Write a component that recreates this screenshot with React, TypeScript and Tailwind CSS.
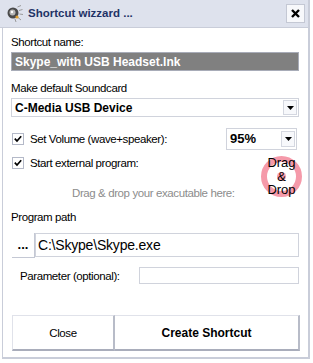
import React from "react";

const lib = { fontFamily: "'Liberation Sans', Arial, sans-serif" };

const Check = () => (
  <span className="flex h-[12px] w-[12px] shrink-0 items-center justify-center border border-[#b4b9c8] bg-white">
    <svg width="8" height="8" viewBox="0 0 8 8">
      <path d="M0.8 3.6 L3 6 L7.2 1.2" stroke="#000" strokeWidth="1.7" fill="none" />
    </svg>
  </span>
);

const Arrow = ({ h }: { h: string }) => (
  <span className={`mr-[1px] flex w-[14px] items-center justify-center border border-[#d4d7e0] bg-[#f7f8fb] ${h}`}>
    <svg width="7" height="4" viewBox="0 0 7 4">
      <path d="M0 0 H7 L3.5 4 Z" fill="#000" />
    </svg>
  </span>
);

export default function App() {
  return (
    <div className="h-[363px] w-[313px] bg-white text-black" style={lib}>
      <div className="flex h-[359px] w-[310px] flex-col">
        <div className="flex h-[28px] shrink-0 items-center border-b border-r-2 border-[#c9cdd9] bg-[#dee2ed] pl-[6px] pr-[3px]">
          <svg width="17" height="17" viewBox="0 0 17 17" className="shrink-0">
            <circle cx="7" cy="8" r="5.5" fill="#4a4a4a" />
            <circle cx="6.5" cy="7.5" r="3" fill="#b8b8b8" />
            <circle cx="6" cy="7" r="1.2" fill="#fff" />
            <path d="M11.5 2 L15 0.5 M13 5.5 L16.5 4.5 M13.5 9 L17 9.5 M12 12.5 L15 15 M9 14 L10 17" stroke="#9a9a9a" strokeWidth="1" />
            <circle cx="11" cy="12" r="1.6" fill="#e0a030" />
          </svg>
          <span className="ml-[5px] text-[11.5px] font-bold text-[#1f3366]">
            Shortcut wizzard ...
          </span>
          <span className="ml-auto flex h-[19px] w-[19px] items-center justify-center border border-[#c4c8d4] bg-[#f7f8fb]">
            <svg width="9" height="9" viewBox="0 0 9 9">
              <path d="M1 1 L8 8 M8 1 L1 8" stroke="#000" strokeWidth="2.4" />
            </svg>
          </span>
        </div>
        <div className="ml-[2px] flex flex-1 flex-col whitespace-nowrap border-b-2 border-l border-r-2 border-[#c9cdd9] pl-[8px] pr-[9px] text-[11.5px] leading-[14px] tracking-[-0.4px]">
          <div className="mt-[7px] h-[14px]">Shortcut name:</div>
          <div className="mt-[3px] flex h-[19px] shrink-0 items-center border border-[#a8acb8] bg-[#808080] pl-[3px] text-[12px] font-bold tracking-[0px] text-white">
            Skype_with USB Headset.lnk
          </div>
          <div className="mt-[10px] h-[14px]">Make default Soundcard</div>
          <div className="mt-[3px] flex h-[19px] shrink-0 items-center border border-[#d0d3dc] bg-white">
            <span className="flex-1 pl-[3px] text-[12px] font-bold tracking-[0px]">C-Media USB Device</span>
            <Arrow h="h-[15px]" />
          </div>
          <div className="mt-[11px] flex h-[22px] shrink-0 items-center">
            <span className="ml-[1px]"><Check /></span>
            <span className="ml-[6px]">Set Volume (wave+speaker):</span>
            <div className="ml-auto mr-[2px] flex h-[22px] w-[71px] items-center border border-[#d0d3dc] bg-white">
              <span className="flex-1 pl-[3px] text-[13px] font-bold tracking-[0px]">95%</span>
              <Arrow h="h-[16px]" />
            </div>
          </div>
          <div className="relative">
            <div className="mt-[6px] flex h-[14px] items-center">
              <span className="ml-[1px]"><Check /></span>
              <span className="ml-[6px]">Start external program:</span>
            </div>
            <div className="mt-[16px] h-[14px] pl-[61px] text-[#8c8c8c]">Drag &amp; drop your exacutable here:</div>
            <div className="absolute right-[-3px] top-[6px] flex h-[41px] w-[41px] items-center justify-center">
              <div className="absolute inset-0 rounded-full border-[6px] border-[#f59aaa]" />
              <div className="absolute h-[9px] w-[9px] rounded-full bg-[#f59aaa]" />
              <div className="relative text-center text-[13px] leading-[13.5px] tracking-[0px]">Drag<br />&amp;<br />Drop</div>
            </div>
          </div>
          <div className="mt-[10px] h-[14px]">Program path</div>
          <div className="mt-[9px] flex h-[25px] shrink-0">
            <span className="ml-[1px] flex w-[23px] items-center justify-center border-b border-r border-[#c4c8d4] bg-white pb-[2px] text-[13px] font-bold leading-none tracking-[0px]">...</span>
            <span className="flex h-[24px] flex-1 items-center border border-[#d0d3dc] bg-white pl-[2px] text-[14px] tracking-[-0.2px]">C:\Skype\Skype.exe</span>
          </div>
          <div className="mt-[9px] flex h-[17px] shrink-0 items-center">
            <span className="ml-[9px]">Parameter (optional):</span>
            <span className="ml-auto h-[17px] w-[160px] border border-[#d0d3dc] bg-white" />
          </div>
          <div className="ml-[1px] mr-[-1px] mt-[31px] flex h-[36px] shrink-0">
            <span className="flex w-[103px] items-center justify-center border-b-2 border-l border-r-2 border-t border-[#e0e2ea] border-b-[#a9adbb] border-r-[#b8bcc8] bg-white">Close</span>
            <span className="flex flex-1 items-center justify-center border-b-2 border-r-2 border-t border-[#e0e2ea] border-b-[#a9adbb] border-r-[#b8bcc8] bg-white text-[12px] font-bold tracking-[0px]">Create Shortcut</span>
          </div>
        </div>
      </div>
    </div>
  );
}
